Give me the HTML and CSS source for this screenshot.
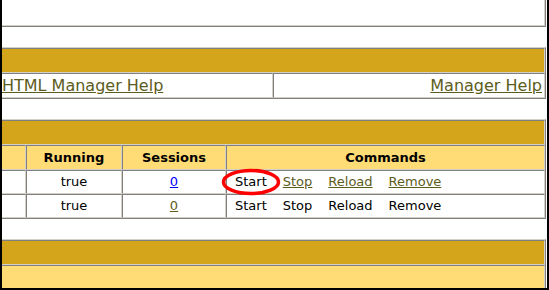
FILE: index.html
```html
<!doctype html>
<html>
<head>
<meta charset="utf-8">
<title>Tomcat Web Application Manager</title>
<link rel="stylesheet" href="styles.css">
</head>
<body>
<div class="frame">
	<table class="box top">
		<tr><td></td></tr>
	</table>

	<table class="box nav">
		<colgroup><col class="half-l"><col class="half-r"></colgroup>
		<tr><td class="title" colspan="2"></td></tr>
		<tr>
			<td class="row-left"><a href="#">HTML Manager Help</a></td>
			<td class="row-right"><a href="#">Manager Help</a></td>
		</tr>
	</table>

	<table class="box apps">
		<colgroup><col class="c-path"><col class="c-run"><col class="c-ses"><col class="c-cmd"></colgroup>
		<tr><td class="title" colspan="4"></td></tr>
		<tr class="head">
			<td></td>
			<td>Running</td>
			<td>Sessions</td>
			<td>Commands</td>
		</tr>
		<tr class="row">
			<td></td>
			<td>true</td>
			<td><a href="#" class="fresh">0</a></td>
			<td class="cmd-cell">
				<div class="cmds">
					<span class="start">Start<svg class="ring" width="61" height="28" viewBox="0 0 61 28"><ellipse cx="30" cy="14" rx="27.5" ry="11.5" fill="none" stroke="#ff0000" stroke-width="3.5"/></svg></span>
					<a href="#">Stop</a>
					<a href="#">Reload</a>
					<a href="#">Remove</a>
				</div>
			</td>
		</tr>
		<tr class="row">
			<td></td>
			<td>true</td>
			<td><a href="#">0</a></td>
			<td class="cmd-cell">
				<div class="cmds">
					<span>Start</span>
					<span>Stop</span>
					<span>Reload</span>
					<span>Remove</span>
				</div>
			</td>
		</tr>
	</table>

	<table class="box deploy">
		<tr><td class="title"></td></tr>
		<tr class="head"><td></td></tr>
	</table>
</div>
</body>
</html>
```

FILE: styles.css
```css
*{margin: 0;padding: 0;}
body{
	background: #ffffff;
	font-family: "DejaVu Sans", Verdana, sans-serif;
	color: #000000;
}
.frame{
	width: 549px;
	height: 290px;
	box-sizing: border-box;
	border: 2px solid #000000;
	border-top: none;
	overflow: hidden;
	display: flex;
	flex-direction: column;
	gap: 20px;
	background: #ffffff;
}
.box{
	flex: none;
	width: 544px;
	margin-right: 1px;
	table-layout: fixed;
	border-collapse: separate;
	border-spacing: 0;
	border-style: solid;
	border-width: 1px 1px 1px 0;
	border-color: #d4d0c8 #808080 #808080;
}
.box td{
	padding: 0;
	height: 23px;
	border: 1px solid;
	border-color: #808080 #d4d0c8 #d4d0c8 #808080;
	font-size: 13px;
	line-height: 22px;
	text-align: center;
	vertical-align: middle;
}
.box td:first-child{
	border-left: none;
}
.top{
	border-top: none;
}
.top td{
	border-top: none;
	height: 25px;
}
.title{
	background: #d4a41b;
}
.head td{
	background: #ffdc75;
	font-weight: bold;
}
.row td{
	height: 22px;
}
a{
	color: #5c5c1c;
}
a.fresh{
	color: #0000ff;
}
.half-l{width: 271px;}
.half-r{width: 272px;}
.c-path{width: 24px;}
.c-run{width: 96px;}
.c-ses{width: 104px;}
.c-cmd{width: 319px;}
.nav .row-left,
.nav .row-right{
	font-size: 16px;
	line-height: 23px;
}
.nav .row-left{
	text-align: left;
}
.nav .row-right{
	text-align: right;
	padding-right: 2px;
}
.cmd-cell{
	padding-left: 8px !important;
}
.cmds{
	display: flex;
	gap: 16px;
	line-height: 22px;
}
.start{
	position: relative;
}
.ring{
	position: absolute;
	left: -14px;
	top: -3px;
	overflow: visible;
}
```
